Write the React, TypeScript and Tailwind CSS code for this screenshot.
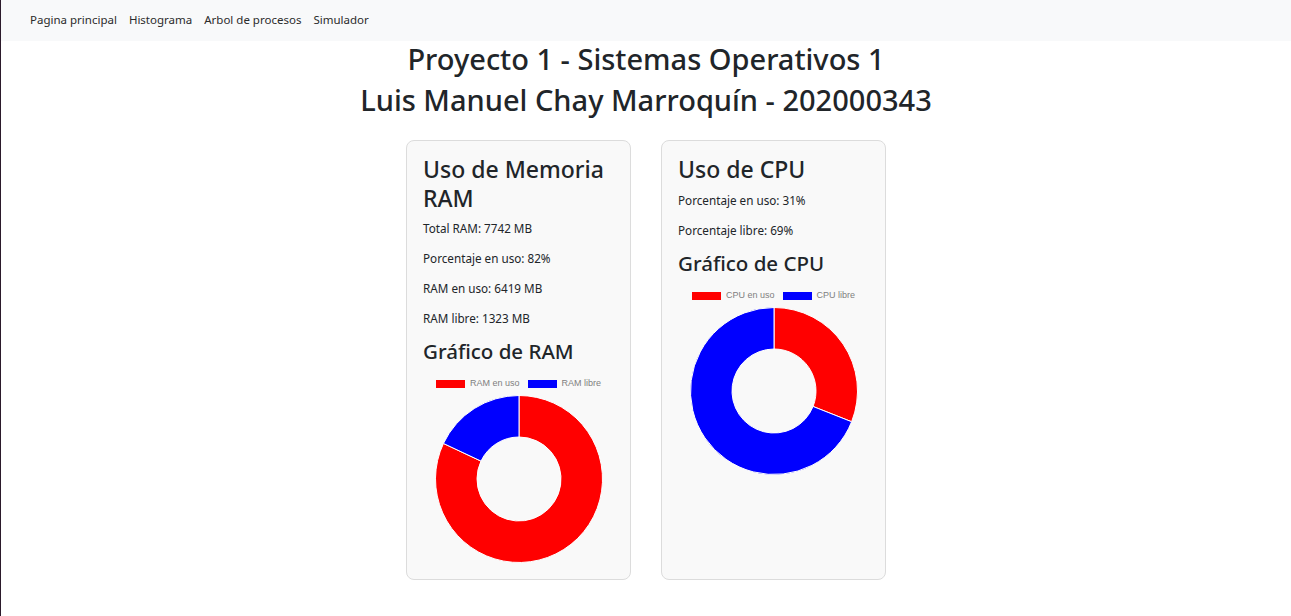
import React from 'react'

const navLinks = ['Pagina principal', 'Histograma', 'Arbol de procesos', 'Simulador']

const RED = '#ff0000'
const BLUE = '#0000ff'

// ring slice from angle a0 to a1 (degrees, 0 = top, clockwise)
function slice(cx: number, cy: number, R: number, r: number, a0: number, a1: number) {
  const p = (rad: number, a: number) => {
    const t = ((a - 90) * Math.PI) / 180
    return `${(cx + rad * Math.cos(t)).toFixed(2)} ${(cy + rad * Math.sin(t)).toFixed(2)}`
  }
  const large = a1 - a0 > 180 ? 1 : 0
  return `M ${p(R, a0)} A ${R} ${R} 0 ${large} 1 ${p(R, a1)} L ${p(r, a1)} A ${r} ${r} 0 ${large} 0 ${p(r, a0)} Z`
}

function Donut({ used }: { used: number }) {
  const cx = 96
  const cy = 85
  const end = (used / 100) * 360
  return (
    <svg width="191" height="170" viewBox="0 0 191 170" className="mt-[3px] block">
      <path d={slice(cx, cy, 83.5, 42, 0, end)} fill={RED} stroke="#fff" strokeWidth="1" />
      <path d={slice(cx, cy, 83.5, 42, end, 360)} fill={BLUE} stroke="#fff" strokeWidth="1" />
    </svg>
  )
}

function Legend({ items }: { items: string[] }) {
  return (
    <div className="flex h-[14px] items-center justify-center gap-[8px] font-['Liberation_Sans',Arial,sans-serif] text-[9px] text-[#808080]">
      {items.map((label, i) => (
        <div key={label} className="flex items-center gap-[5px]">
          <span className={`block h-[8px] w-[29px] ${i === 0 ? 'bg-[#ff0000]' : 'bg-[#0000ff]'}`} />
          <span>{label}</span>
        </div>
      ))}
    </div>
  )
}

function Card({
  title,
  lines,
  chartTitle,
  legend,
  used,
}: {
  title: string
  lines: string[]
  chartTitle: string
  legend: string[]
  used: number
}) {
  return (
    <div className="w-[225px] rounded-[8px] border border-[#dcdcdc] bg-[#f9f9f9] px-[16px] pb-[15px] pt-[14px]">
      <h4 className="mb-[7px] text-[23px] font-medium leading-[28.5px]">{title}</h4>
      {lines.map((l) => (
        <p key={l} className="mb-[12px] text-[11.7px] leading-[18px]">
          {l}
        </p>
      ))}
      <h5 className="mb-[14px] mt-[2px] text-[20.5px] font-medium leading-[24px]">{chartTitle}</h5>
      <Legend items={legend} />
      <Donut used={used} />
    </div>
  )
}

export default function App() {
  return (
    <div className="min-h-[616px] border-l border-[#2b1a2b] bg-white font-['Noto_Sans',sans-serif] text-[#212529]">
      <nav className="flex h-[41px] items-center gap-[12px] bg-[#f8f9fa] pb-[2px] pl-[29px] text-[11.5px] text-[#2b2b2b]">
        {navLinks.map((l) => (
          <a key={l} href="#">
            {l}
          </a>
        ))}
      </nav>

      <div className="mb-[24px] mt-[1px] text-center">
        <h3 className="mb-[8px] text-[29px] font-medium leading-[33px]">Proyecto 1 - Sistemas Operativos 1</h3>
        <h3 className="text-[29px] font-medium leading-[33px]">Luis Manuel Chay Marroquín - 202000343</h3>
      </div>

      <div className="flex items-stretch justify-center gap-[30px]">
        <Card
          title="Uso de Memoria RAM"
          lines={['Total RAM: 7742 MB', 'Porcentaje en uso: 82%', 'RAM en uso: 6419 MB', 'RAM libre: 1323 MB']}
          chartTitle="Gráfico de RAM"
          legend={['RAM en uso', 'RAM libre']}
          used={82}
        />
        <Card
          title="Uso de CPU"
          lines={['Porcentaje en uso: 31%', 'Porcentaje libre: 69%']}
          chartTitle="Gráfico de CPU"
          legend={['CPU en uso', 'CPU libre']}
          used={31}
        />
      </div>
    </div>
  )
}
